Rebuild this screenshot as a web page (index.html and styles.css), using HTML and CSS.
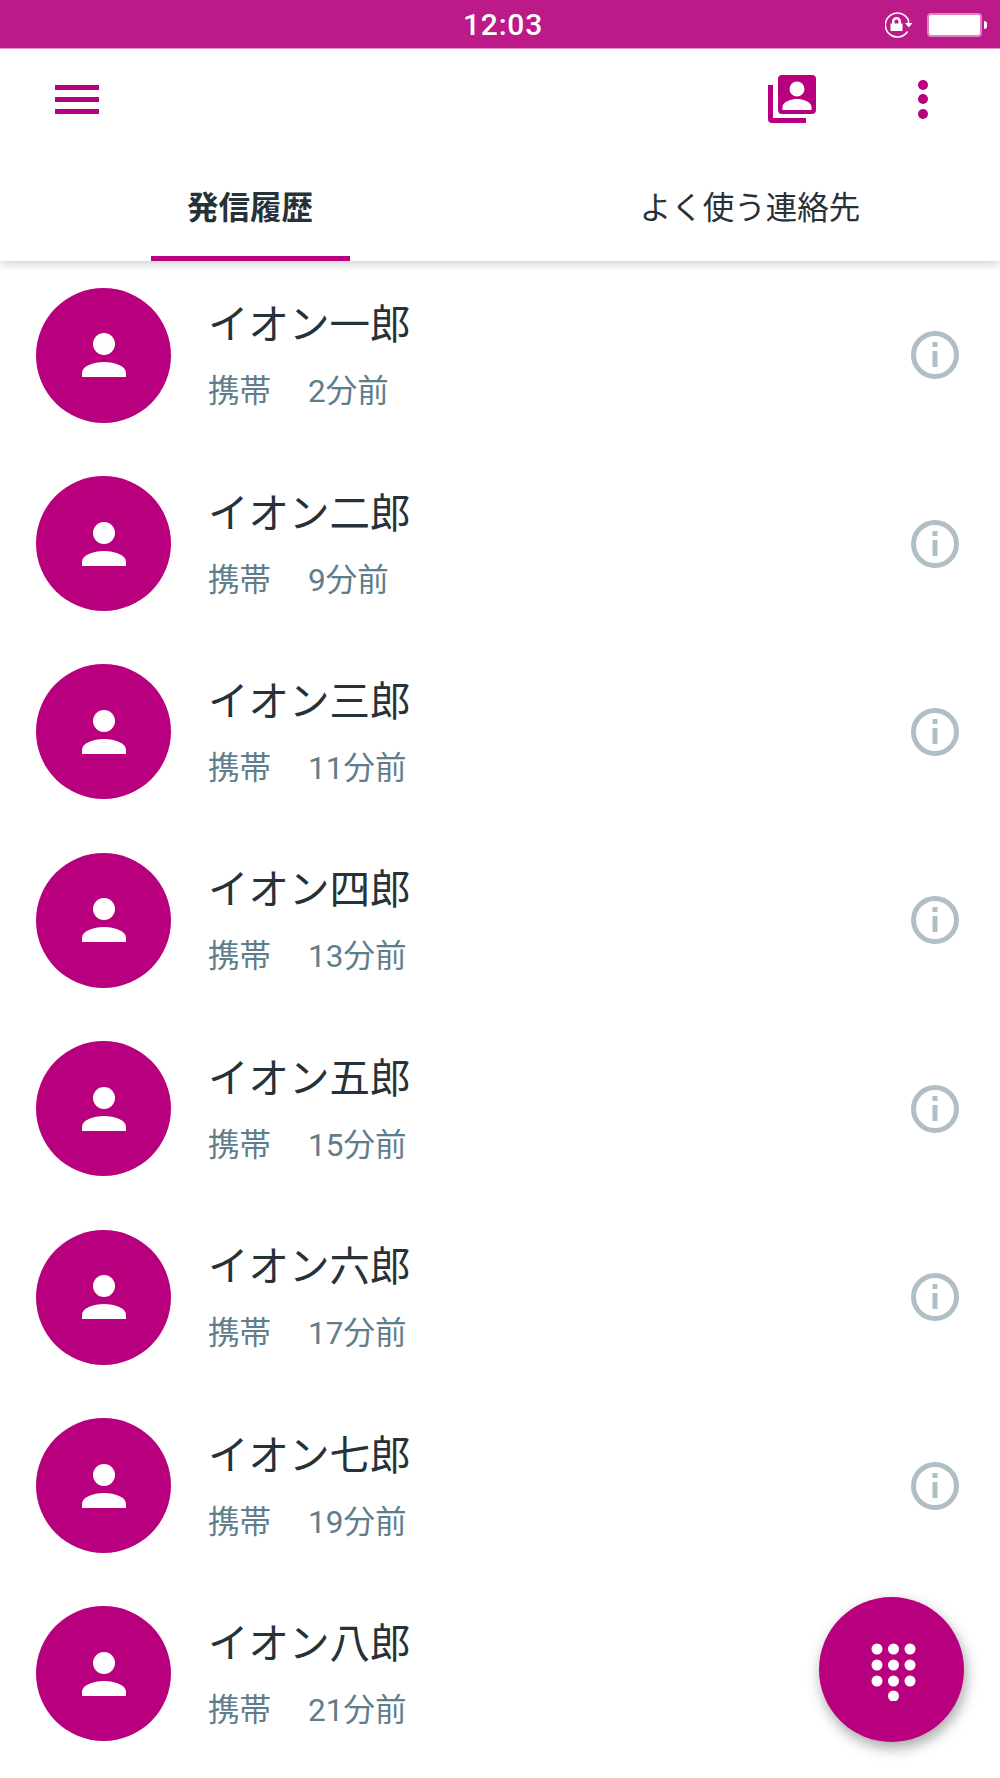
FILE: index.html
```html
<!DOCTYPE html>
<html lang="ja">
<head>
    <meta charset="UTF-8">
    <meta name="viewport" content="width=device-width, initial-scale=1.0">
    <title>発信履歴</title>
    <link rel="stylesheet" href="styles.css">
</head>
<body>

<svg class="sprites" width="0" height="0">
    <symbol id="person" viewBox="0 0 44 44">
        <circle cx="22" cy="11" r="11"/>
        <path d="M0 44v-4C0 33 11 29 22 29s22 4 22 11v4z"/>
    </symbol>
    <symbol id="info" viewBox="0 0 48 48">
        <circle cx="24" cy="24" r="21.5" fill="none" stroke="#b0bec5" stroke-width="5"/>
        <rect x="21.5" y="11" width="5" height="5" fill="#b0bec5"/>
        <rect x="21.5" y="20" width="5" height="16" fill="#b0bec5"/>
    </symbol>
</svg>

<header class="app-header">
    <div class="status-bar">
        <span class="clock">12:03</span>
        <div class="status-icons">
            <svg class="rotate-lock" width="28" height="26" viewBox="0 0 28 26">
                <path d="M22.500 19.500A12 12 0 1 1 23.500 8.500V11" fill="none" stroke="#fff" stroke-width="1.600"/>
                <path d="M20 11h7.500l-3.750 4.500z" fill="#fff"/>
                <path d="M7 11.500V9.500a4.500 4.500 0 0 1 9 0v2h1.500V19H5.500v-7.500zm2.500 0h4v-2a2 2 0 0 0-4 0z" fill="#fff"/>
            </svg>
            <div class="battery"></div>
            <div class="battery-tip"></div>
        </div>
    </div>
    <div class="toolbar">
        <div class="menu-icon"><i></i><i></i><i></i></div>
        <svg class="contacts-icon" width="48" height="48" viewBox="0 0 48 48">
            <path d="M0 10h5v33h33v5H4a4 4 0 0 1-4-4z" fill="#b8007f"/>
            <path fill-rule="evenodd" fill="#b8007f" d="M14 0h30a4 4 0 0 1 4 4v31a4 4 0 0 1-4 4H14a4 4 0 0 1-4-4V4a4 4 0 0 1 4-4zm15 6.500a7.500 7.500 0 1 0 0 15 7.500 7.500 0 0 0 0-15zM14.500 35h29v-3c0-5.500-9.500-8-14.500-8s-14.500 2.500-14.500 8z"/>
        </svg>
        <div class="more-icon"><i></i><i></i><i></i></div>
    </div>
    <nav class="tabs">
        <a class="tab active">発信履歴</a>
        <a class="tab">よく使う連絡先</a>
    </nav>
</header>

<ul class="call-list">
    <li class="call-row">
        <div class="avatar"><svg width="44" height="44"><use href="#person"/></svg></div>
        <div class="call-text">
            <div class="call-name">イオン一郎</div>
            <div class="call-meta"><span class="call-type">携帯</span><span>2分前</span></div>
        </div>
        <svg class="info-icon" width="48" height="48"><use href="#info"/></svg>
    </li>
    <li class="call-row">
        <div class="avatar"><svg width="44" height="44"><use href="#person"/></svg></div>
        <div class="call-text">
            <div class="call-name">イオン二郎</div>
            <div class="call-meta"><span class="call-type">携帯</span><span>9分前</span></div>
        </div>
        <svg class="info-icon" width="48" height="48"><use href="#info"/></svg>
    </li>
    <li class="call-row">
        <div class="avatar"><svg width="44" height="44"><use href="#person"/></svg></div>
        <div class="call-text">
            <div class="call-name">イオン三郎</div>
            <div class="call-meta"><span class="call-type">携帯</span><span>11分前</span></div>
        </div>
        <svg class="info-icon" width="48" height="48"><use href="#info"/></svg>
    </li>
    <li class="call-row">
        <div class="avatar"><svg width="44" height="44"><use href="#person"/></svg></div>
        <div class="call-text">
            <div class="call-name">イオン四郎</div>
            <div class="call-meta"><span class="call-type">携帯</span><span>13分前</span></div>
        </div>
        <svg class="info-icon" width="48" height="48"><use href="#info"/></svg>
    </li>
    <li class="call-row">
        <div class="avatar"><svg width="44" height="44"><use href="#person"/></svg></div>
        <div class="call-text">
            <div class="call-name">イオン五郎</div>
            <div class="call-meta"><span class="call-type">携帯</span><span>15分前</span></div>
        </div>
        <svg class="info-icon" width="48" height="48"><use href="#info"/></svg>
    </li>
    <li class="call-row">
        <div class="avatar"><svg width="44" height="44"><use href="#person"/></svg></div>
        <div class="call-text">
            <div class="call-name">イオン六郎</div>
            <div class="call-meta"><span class="call-type">携帯</span><span>17分前</span></div>
        </div>
        <svg class="info-icon" width="48" height="48"><use href="#info"/></svg>
    </li>
    <li class="call-row">
        <div class="avatar"><svg width="44" height="44"><use href="#person"/></svg></div>
        <div class="call-text">
            <div class="call-name">イオン七郎</div>
            <div class="call-meta"><span class="call-type">携帯</span><span>19分前</span></div>
        </div>
        <svg class="info-icon" width="48" height="48"><use href="#info"/></svg>
    </li>
    <li class="call-row">
        <div class="avatar"><svg width="44" height="44"><use href="#person"/></svg></div>
        <div class="call-text">
            <div class="call-name">イオン八郎</div>
            <div class="call-meta"><span class="call-type">携帯</span><span>21分前</span></div>
        </div>
    </li>
</ul>

<button class="fab">
    <svg width="46" height="58" viewBox="0 0 46 58" fill="#fff">
        <circle cx="6" cy="6" r="5.500"/><circle cx="22.500" cy="6" r="5.500"/><circle cx="39" cy="6" r="5.500"/>
        <circle cx="6" cy="22" r="5.500"/><circle cx="22.500" cy="22" r="5.500"/><circle cx="39" cy="22" r="5.500"/>
        <circle cx="6" cy="38" r="5.500"/><circle cx="22.500" cy="38" r="5.500"/><circle cx="39" cy="38" r="5.500"/>
        <circle cx="22.500" cy="53" r="5.500"/>
    </svg>
</button>

</body>
</html>
```

FILE: styles.css
```css
/* base */
* {
    box-sizing: border-box;
}

body {
    margin: 0;
    height: 1778px;
    overflow: hidden;
    position: relative;
    background-color: #fff;
    font-family: Roboto, "Noto Sans CJK JP", sans-serif;
    color: #263238;
}

.sprites {
    position: absolute;
}

/* header */
.app-header {
    position: relative;
    z-index: 1;
    height: 261px;
    background-color: #fff;
    box-shadow: 0 2px 10px rgba(0, 0, 0, 0.22);
}

.status-bar {
    position: relative;
    height: 49px;
    background-color: #bb1a88;
    border-bottom: 1px solid #e58fcb;
    display: flex;
    justify-content: center;
    align-items: center;
    color: #fff;
}

.clock {
    font-size: 30px;
    font-weight: 500;
    letter-spacing: 0.8px;
    margin-left: 6px;
    margin-top: 1px;
}

.status-icons {
    position: absolute;
    right: 13px;
    top: 12px;
    display: flex;
    align-items: center;
}

.rotate-lock {
    margin-right: 14px;
}

.battery {
    width: 55px;
    height: 24px;
    background-color: #fff;
    border: 2px solid #e17fc3;
    border-radius: 4px;
}

.battery-tip {
    width: 3px;
    height: 8px;
    margin-left: 2px;
    background-color: #fff;
    border-radius: 0 3px 3px 0;
}

.toolbar {
    display: flex;
    align-items: center;
    height: 100px;
    padding: 0 72px 0 55px;
}

.menu-icon {
    width: 44px;
    margin-right: auto;
    display: flex;
    flex-direction: column;
    gap: 7px;
}

.menu-icon i {
    display: block;
    height: 5px;
    background-color: #b8007f;
}

.contacts-icon {
    margin-right: 102px;
}

.more-icon {
    display: flex;
    flex-direction: column;
    gap: 4.500px;
}

.more-icon i {
    display: block;
    width: 10px;
    height: 10px;
    border-radius: 50%;
    background-color: #b8007f;
}

/* tabs */
.tabs {
    display: flex;
    height: 112px;
}

.tab {
    flex: 1;
    position: relative;
    display: flex;
    justify-content: center;
    padding-top: 37px;
    font-size: 31.500px;
    line-height: 46px;
}

.tab.active {
    font-weight: 700;
}

.tab.active::after {
    content: "";
    position: absolute;
    left: 151px;
    bottom: 0;
    width: 199px;
    height: 5px;
    background-color: #b8007f;
}

/* list */
.call-list {
    list-style: none;
    margin: 0;
    padding: 0;
}

.call-row {
    display: flex;
    align-items: center;
    height: 188.400px;
    padding: 0 41px 0 36px;
}

.avatar {
    flex: none;
    width: 135px;
    height: 135px;
    border-radius: 50%;
    background-color: #b8007f;
    display: flex;
    justify-content: center;
    align-items: center;
    fill: #fff;
}

.call-text {
    flex: 1;
    margin-left: 37px;
}

.call-name {
    font-size: 40.500px;
    line-height: 58px;
}

.call-meta {
    margin-top: 16px;
    font-size: 31.500px;
    line-height: 44px;
    color: #607d8b;
}

.call-type {
    margin-right: 37px;
}

.info-icon {
    flex: none;
}

/* dial button */
.fab {
    position: absolute;
    left: 819px;
    top: 1597px;
    width: 145px;
    height: 145px;
    padding: 4px 0 0 4px;
    border: none;
    border-radius: 50%;
    background-color: #b8007f;
    box-shadow: 2px 6px 14px rgba(0, 0, 0, 0.35);
    display: flex;
    justify-content: center;
    align-items: center;
}
```
